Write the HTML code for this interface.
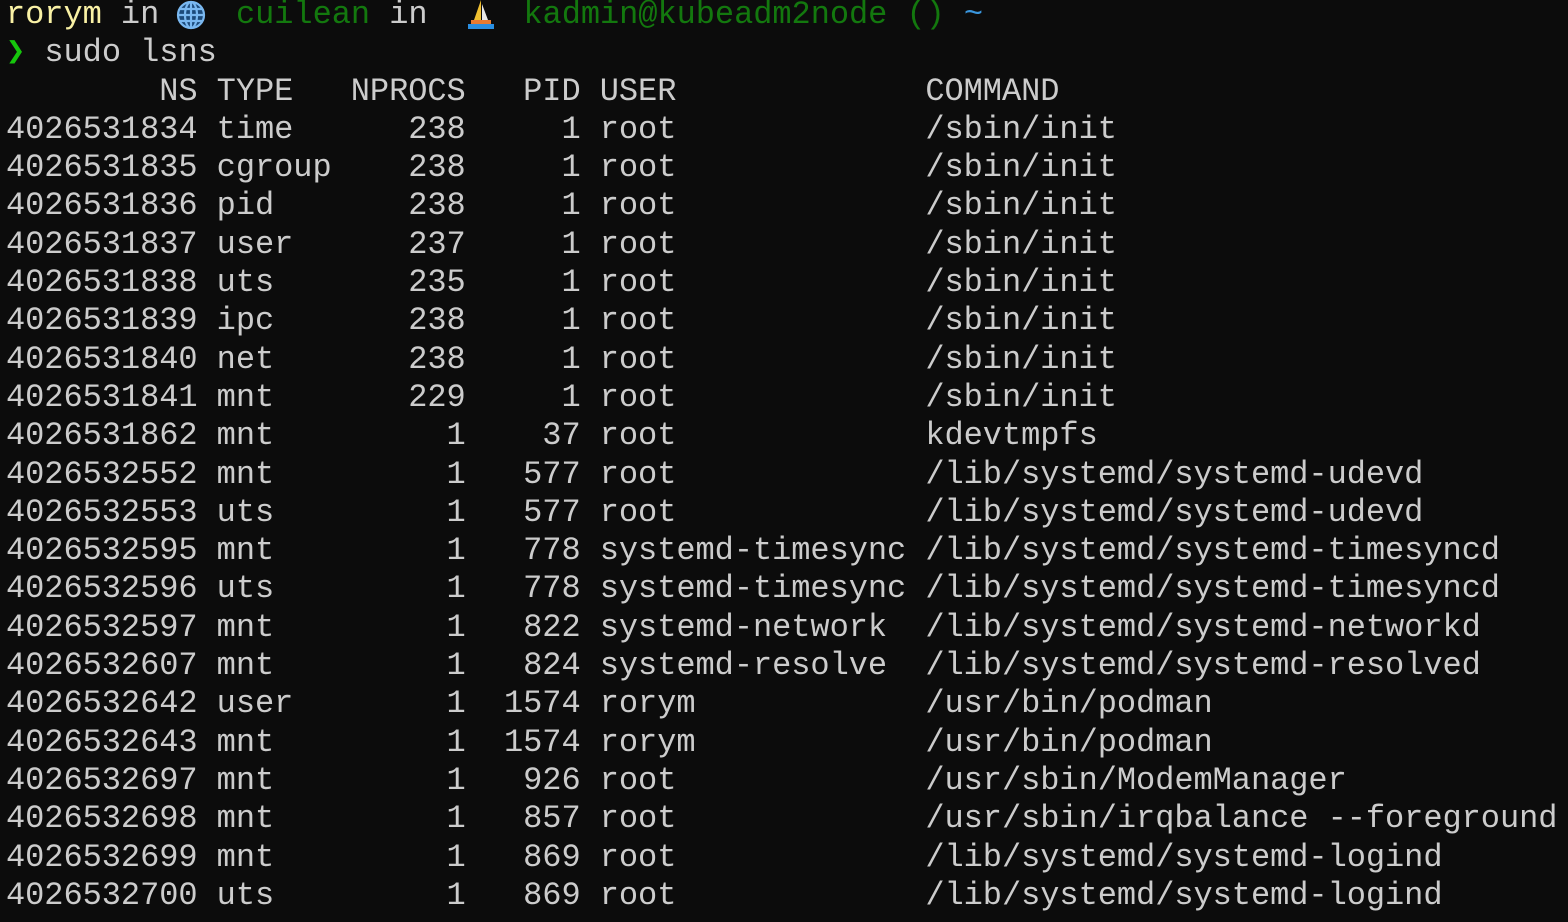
<!DOCTYPE html>
<html><head><meta charset="utf-8"><style>
html,body{margin:0;padding:0;background:#0c0c0c;width:1568px;height:922px;overflow:hidden}
pre{position:absolute;left:6px;top:-5px;margin:0;font-family:"Liberation Mono",monospace;font-size:32px;line-height:38.3px;color:#cccccc;letter-spacing:-0.05px}
.y{color:#f9f1a5}.g{color:#13780e}.p{color:#16c60c}.c{color:#3a96dd}
.ic{display:inline-block;width:2ch;height:1em;vertical-align:-4px;position:relative}
</style></head><body>
<pre><span class="y">rorym</span> in <span class="ic"><svg width="30" height="30" viewBox="0 0 30 30" style="position:absolute;left:-2px;top:5px"><g fill="none" stroke="#7ab8f0" stroke-width="2.2"><circle cx="15" cy="15" r="13" fill="#1c4a7a"/><ellipse cx="15" cy="15" rx="6" ry="13"/><line x1="15" y1="2" x2="15" y2="28"/><line x1="2" y1="15" x2="28" y2="15"/><line x1="4" y1="9" x2="26" y2="9"/><line x1="4" y1="21" x2="26" y2="21"/></g></svg></span> <span class="g">cuilean</span> in  <span class="ic"><svg width="30" height="32" viewBox="0 0 30 32" style="position:absolute;left:0px;top:3px"><polygon points="15,2 15,22 8,22" fill="#f0c030"/><polygon points="16,6 16,22 22,22" fill="#e8e8e8"/><rect x="5" y="22" width="20" height="4" fill="#e87a30"/><rect x="2" y="26" width="26" height="5" fill="#2a8ee0"/></svg></span> <span class="g">kadmin@kubeadm2node () </span><span class="c">~</span>
<span class="p">❯</span> sudo lsns
        NS TYPE   NPROCS   PID USER             COMMAND
4026531834 time      238     1 root             /sbin/init
4026531835 cgroup    238     1 root             /sbin/init
4026531836 pid       238     1 root             /sbin/init
4026531837 user      237     1 root             /sbin/init
4026531838 uts       235     1 root             /sbin/init
4026531839 ipc       238     1 root             /sbin/init
4026531840 net       238     1 root             /sbin/init
4026531841 mnt       229     1 root             /sbin/init
4026531862 mnt         1    37 root             kdevtmpfs
4026532552 mnt         1   577 root             /lib/systemd/systemd-udevd
4026532553 uts         1   577 root             /lib/systemd/systemd-udevd
4026532595 mnt         1   778 systemd-timesync /lib/systemd/systemd-timesyncd
4026532596 uts         1   778 systemd-timesync /lib/systemd/systemd-timesyncd
4026532597 mnt         1   822 systemd-network  /lib/systemd/systemd-networkd
4026532607 mnt         1   824 systemd-resolve  /lib/systemd/systemd-resolved
4026532642 user        1  1574 rorym            /usr/bin/podman
4026532643 mnt         1  1574 rorym            /usr/bin/podman
4026532697 mnt         1   926 root             /usr/sbin/ModemManager
4026532698 mnt         1   857 root             /usr/sbin/irqbalance --foreground
4026532699 mnt         1   869 root             /lib/systemd/systemd-logind
4026532700 uts         1   869 root             /lib/systemd/systemd-logind</pre>
</body></html>
